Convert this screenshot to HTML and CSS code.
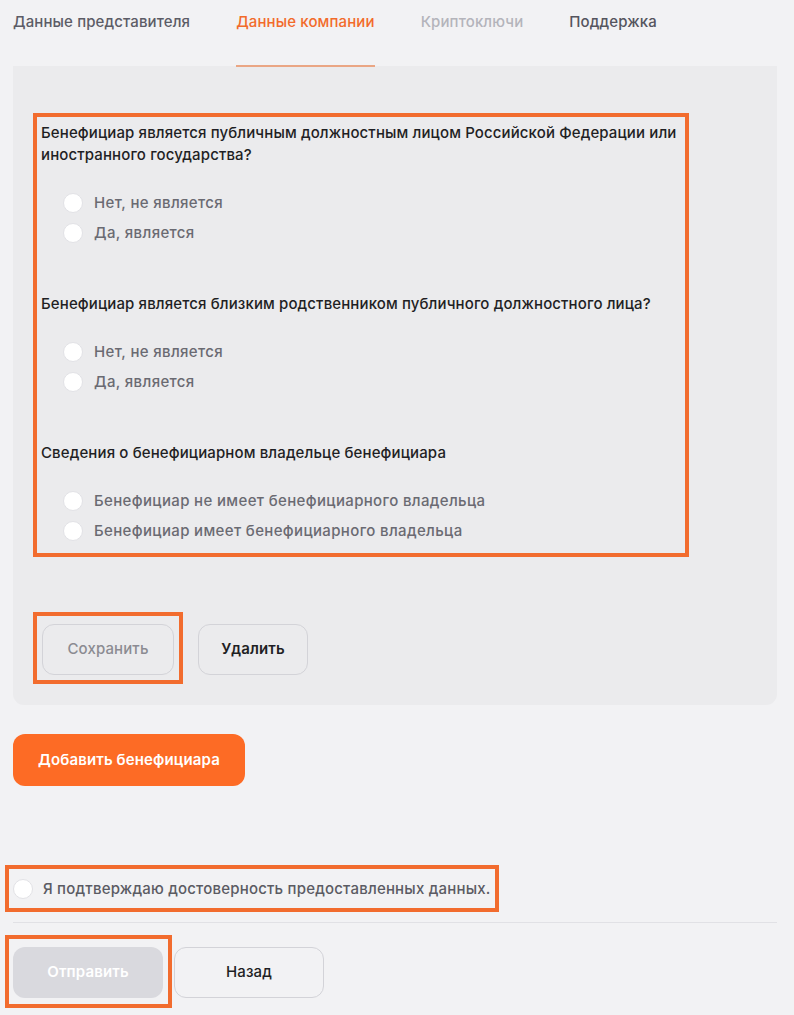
FILE: index.html
```html
<!DOCTYPE html>
<html lang="ru">
<head>
<meta charset="utf-8">
<title>Данные компании</title>
<link rel="stylesheet" href="styles.css">
</head>
<body>
<div class="page">
  <nav class="tabs">
    <div class="tab tab-muted">Данные представителя</div>
    <div class="tab tab-active">Данные компании</div>
    <div class="tab tab-disabled">Криптоключи</div>
    <div class="tab tab-dark">Поддержка</div>
  </nav>

  <section class="card">
    <div class="mark mark-questions">
      <div class="question">
        <p class="q-title">Бенефициар является публичным должностным лицом Российской Федерации или иностранного государства?</p>
        <div class="options">
          <label class="option"><span class="radio"></span>Нет, не является</label>
          <label class="option"><span class="radio"></span>Да, является</label>
        </div>
      </div>
      <div class="question">
        <p class="q-title">Бенефициар является близким родственником публичного должностного лица?</p>
        <div class="options">
          <label class="option"><span class="radio"></span>Нет, не является</label>
          <label class="option"><span class="radio"></span>Да, является</label>
        </div>
      </div>
      <div class="question">
        <p class="q-title">Сведения о бенефициарном владельце бенефициара</p>
        <div class="options">
          <label class="option"><span class="radio"></span>Бенефициар не имеет бенефициарного владельца</label>
          <label class="option"><span class="radio"></span>Бенефициар имеет бенефициарного владельца</label>
        </div>
      </div>
    </div>

    <div class="card-actions">
      <div class="mark mark-save">
        <button class="btn btn-outline btn-disabled-text">Сохранить</button>
      </div>
      <button class="btn btn-outline btn-delete">Удалить</button>
    </div>
  </section>

  <button class="btn btn-primary">Добавить бенефициара</button>

  <div class="mark mark-confirm">
    <label class="option confirm"><span class="radio"></span>Я подтверждаю достоверность предоставленных данных.</label>
  </div>

  <hr class="divider">

  <div class="footer-actions">
    <div class="mark mark-submit">
      <button class="btn btn-submit">Отправить</button>
    </div>
    <button class="btn btn-outline btn-back">Назад</button>
  </div>
</div>
</body>
</html>
```

FILE: styles.css
```css
* { box-sizing: border-box; }

html, body {
  margin: 0;
  padding: 0;
  background: #f2f2f4;
}

body {
  font-family: Inter, "Noto Sans", Arial, sans-serif;
  font-size: 15px;
  line-height: 22px;
  letter-spacing: 0.12px;
  color: #1f1f24;
}

.page {
  width: 794px;
  height: 1015px;
  overflow: hidden;
  padding: 0 17px 0 13px;
}

.tabs {
  display: flex;
  gap: 46px;
  height: 66px;
}

.tab {
  font-weight: 500;
  padding-top: 11px;
  height: 66px;
  white-space: nowrap;
}

.tab-muted { color: #5c5c66; }
.tab-active {
  color: #f26b2b;
  border-bottom: 2px solid #eaa684;
  position: relative;
  z-index: 1;
  margin-bottom: -1px;
  height: 67px;
}
.tab-disabled { color: #b4b4bb; }
.tab-dark { color: #55555e; }

.card {
  background: #ebebed;
  border-radius: 0 0 11px 11px;
  padding: 47px 20px 21px;
}

.mark {
  border: 4px solid #f26c2e;
}

.mark-questions {
  width: 656px;
  padding: 5px 4px 7px;
}

.question + .question {
  margin-top: 45px;
}

.q-title {
  margin: 0;
  font-weight: 500;
  color: #1f1f24;
}

.options {
  margin-top: 22px;
  padding-left: 22px;
}

.option {
  display: flex;
  align-items: center;
  gap: 11px;
  height: 30px;
  color: #6a6a72;
  font-weight: 500;
  letter-spacing: 0.35px;
  white-space: nowrap;
}

.radio {
  flex: none;
  width: 20px;
  height: 20px;
  border-radius: 50%;
  background: #ffffff;
  border: 1px solid #e2e2e6;
}

.card-actions {
  display: flex;
  align-items: flex-start;
  gap: 15px;
  margin-top: 55px;
}

.mark-save {
  padding: 8px 5px 5px;
}

.btn {
  font-family: inherit;
  font-size: 15px;
  font-weight: 600;
  letter-spacing: 0.12px;
  height: 51px;
  border-radius: 12px;
  cursor: pointer;
  display: block;
  padding: 0 0 2px;
}

.btn-outline {
  background: transparent;
  border: 1px solid #d3d3d8;
  color: #1f1f24;
}

.btn-disabled-text {
  width: 132px;
  color: #8b8b92;
  font-weight: 500;
}

.btn-delete {
  width: 110px;
  margin-top: 12px;
}

.btn-primary {
  margin-top: 29px;
  width: 232px;
  height: 52px;
  background: #fd6b25;
  border: none;
  color: #ffffff;
}

.mark-confirm {
  margin: 79px 0 0 -8px;
  width: 494px;
  height: 47px;
  padding: 0 4px;
  display: flex;
  align-items: center;
}

.confirm {
  gap: 10px;
  color: #5b5b63;
  letter-spacing: 0.2px;
}

.divider {
  margin: 10px 0 0;
  border: none;
  border-top: 1px solid #e1e1e5;
}

.footer-actions {
  display: flex;
  align-items: flex-start;
  gap: 2px;
  margin: 12px 0 0 -8px;
}

.mark-submit {
  padding: 8px 5px 6px 4px;
}

.btn-submit {
  width: 150px;
  background: #d9d9de;
  border: none;
  color: #ffffff;
}

.btn-back {
  width: 150px;
  margin-top: 12px;
  font-weight: 500;
}
```
